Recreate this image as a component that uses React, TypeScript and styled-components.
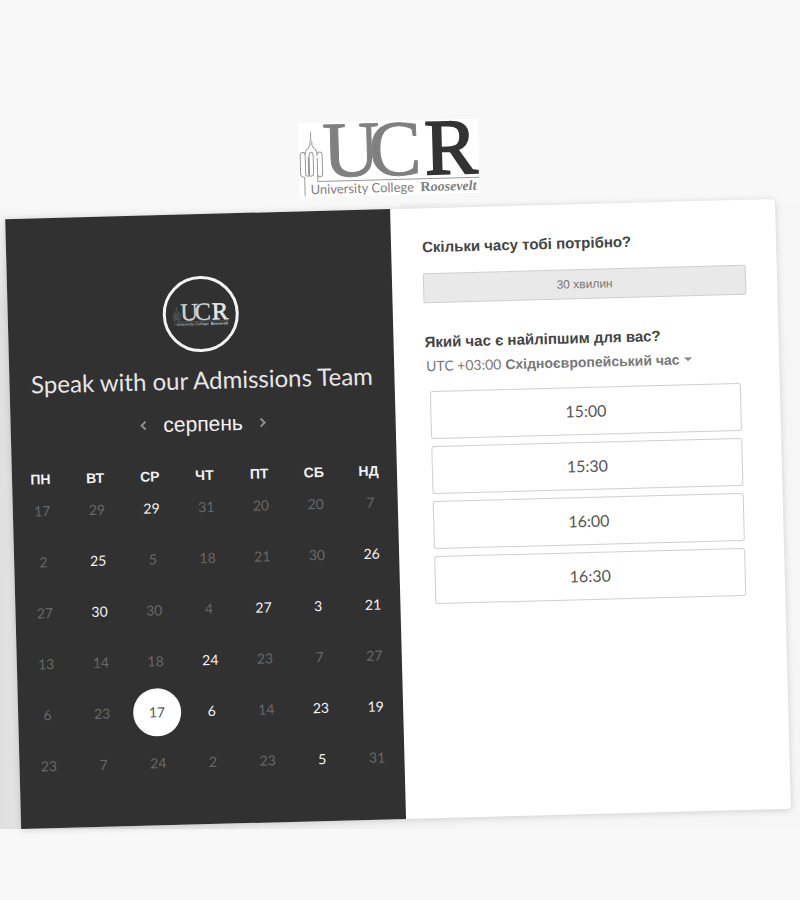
import React, { useState } from "react";
import styled, { createGlobalStyle } from "styled-components";

const SANS = `"Liberation Sans", Arial, sans-serif`;
const HUMANIST = `Lato, "Liberation Sans", sans-serif`;

const GlobalStyle = createGlobalStyle`
  * { box-sizing: border-box; }
  body { margin: 0; background: #f8f8f8; font-family: ${SANS}; }
  button { font: inherit; cursor: pointer; }
`;

const Page = styled.main`
  min-height: 100vh;
  padding: 121px 17px 80px 13px;
  overflow: hidden;
  background:
    linear-gradient(180deg, #f8f8f8, rgba(248, 248, 248, 0)) 0 200px / 50% 110px no-repeat,
    linear-gradient(90deg, #e0e0e0, #e3e3e3 20px, #f6f6f6 60%) 0 203px / 100% 626px no-repeat,
    #f8f8f8;
`;

const Scene = styled.div`
  display: flex;
  flex-direction: column;
  align-items: center;
  gap: 14px;
  transform: rotate(-1.5deg);
  transform-origin: 50% 56%;
`;

const LogoSvg = styled.svg<{ $light: boolean }>`
  display: block;
  overflow: visible;
  background: ${(p) => (p.$light ? "transparent" : "#fff")};
`;

const Card = styled.section`
  width: 100%;
  min-height: 610px;
  display: grid;
  grid-template-columns: 1fr 1fr;
  border-radius: 0 4px 4px 0;
  background: #fff;
  box-shadow: 0 1px 7px rgba(0, 0, 0, 0.16);
`;

const CalendarPanel = styled.section`
  display: flex;
  flex-direction: column;
  align-items: center;
  padding: 62px 0 32px;
  background: #313131;
  color: #f2f2f2;
`;

const Avatar = styled.div`
  width: 76px;
  height: 76px;
  display: grid;
  place-items: center;
  border: 3px solid #f4f4f4;
  border-radius: 50%;
`;

const Title = styled.h1`
  margin: 12px 0 0;
  font: 400 24px/32px ${HUMANIST};
  color: #e6e6e6;
  white-space: nowrap;
`;

const MonthRow = styled.div`
  display: flex;
  align-items: center;
  gap: 14px;
  margin-top: 12px;
`;

const Month = styled.h2`
  margin: 0;
  font: 400 21px/32px ${SANS};
`;

const Arrow = styled.button`
  width: 12px;
  height: 24px;
  padding: 0;
  display: grid;
  place-items: center;
  border: 0;
  background: none;
  color: #8f8f8f;
`;

const Calendar = styled.table`
  width: calc(100% - 2px);
  margin-top: 27px;
  table-layout: fixed;
  border-collapse: collapse;
`;

const Weekday = styled.th`
  height: 16px;
  padding: 0;
  font: 700 14px/16px ${SANS};
`;

const DayCell = styled.td`
  height: 51px;
  padding: 0 0 0 2px;
  text-align: center;
  vertical-align: top;
`;

const Day = styled.button<{ $selected: boolean }>`
  width: 48px;
  height: 48px;
  padding: 0;
  border: 0;
  border-radius: 50%;
  background: ${(p) => (p.$selected ? "#fff" : "transparent")};
  color: ${(p) => (p.$selected ? "#555" : "#f4f4f4")};
  font: 400 14px/16px ${HUMANIST};
  &:disabled { color: #686868; cursor: default; }
`;

const TimePanel = styled.section`
  padding: 27px 31px 32px;
`;

const Question = styled.h2`
  margin: 0;
  font: 700 15px/24px ${SANS};
  color: #444;
`;

const Duration = styled.button`
  display: block;
  width: 100%;
  height: 30px;
  margin: 14px 0 27px;
  border: 1px solid #cfcfcf;
  border-radius: 2px;
  background: #e9e9e9;
  color: #777;
  font: 400 12px/16px ${SANS};
`;

const Zone = styled.button`
  display: flex;
  align-items: center;
  gap: 4px;
  padding: 0 0 0 1px;
  border: 0;
  background: none;
  color: #777;
  font: 400 14px/24px ${HUMANIST};
`;

const ZoneName = styled.span`
  font: 700 14px/24px ${SANS};
`;

const Caret = styled.span`
  margin-left: 1px;
  border: 4px solid transparent;
  border-top-color: #888;
  border-bottom: 0;
`;

const Slots = styled.div`
  display: grid;
  gap: 7px;
  margin-top: 13px;
  padding: 0 8px 0 4px;
`;

const Slot = styled.button`
  height: 48px;
  border: 1px solid #d0d0d0;
  border-radius: 3px;
  background: #fff;
  color: #555;
  font: 400 16px/24px ${HUMANIST};
`;

type LogoProps = { width: number; height: number; light?: boolean };

function Logo({ width, height, light = false }: LogoProps) {
  const soft = light ? "#d0d0d0" : "#808080";
  const strong = light ? "#e6e6e6" : "#333";
  const line = light ? "#8a8a8a" : "#999";
  return (
    <LogoSvg
      $light={light}
      width={width}
      height={height}
      viewBox="0 0 180 74"
      role="img"
      aria-label="University College Roosevelt"
    >
      <g fill="none" stroke={line} strokeWidth="1" strokeLinejoin="round">
        <path d="M12.500 9v9M11.500 18v4q-1 3-4 5l-1 4M13.500 18v4q1 3 4 5l1 4" />
        <path d="M5.500 73V54q-4 0-4-4V33q0-4 2.500-4t2.500 4v17q0 3 2 3t2-3V33q0-4 2-4t2 4v17q0 3-2.500 3t-2.500-3V34" />
        <path d="M18.500 35v15q0 4 2.500 4t2.500-4V33q0-4-2.500-4t-3 4M18.500 50v8.500H180" />
      </g>
      <g fontFamily="Liberation Serif, serif" fontSize="79">
        <text x="24" y="54" fill={soft} stroke={soft}>U</text>
        <text x="70" y="54" fill={soft} stroke={soft}>C</text>
        <text x="126" y="54" fill={strong} stroke={strong} strokeWidth="2">R</text>
      </g>
      <text x="11" y="71" fontFamily="Lato, sans-serif" fontSize="13" fill={soft}>University College</text>
      <text x="121" y="71" fontFamily="Liberation Serif, serif" fontSize="14" fontWeight="700" fill={soft}>
        R<tspan fontStyle="italic">oosevelt</tspan>
      </text>
    </LogoSvg>
  );
}

const weekdays = ["ПН", "ВТ", "СР", "ЧТ", "ПТ", "СБ", "НД"];
const weeks = [
  [17, 29, 29, 31, 20, 20, 7],
  [2, 25, 5, 18, 21, 30, 26],
  [27, 30, 30, 4, 27, 3, 21],
  [13, 14, 18, 24, 23, 7, 27],
  [6, 23, 17, 6, 14, 23, 19],
  [23, 7, 24, 2, 23, 5, 31],
];
const available = new Set(["0-2", "1-1", "1-6", "2-1", "2-4", "2-5", "2-6", "3-3", "4-2", "4-3", "4-5", "4-6", "5-5"]);
const slots = ["15:00", "15:30", "16:00", "16:30"];

export default function App() {
  const [selected, setSelected] = useState("4-2");
  return (
    <Page>
      <GlobalStyle />
      <Scene>
        <Logo width={180} height={74} />
        <Card>
          <CalendarPanel>
            <Avatar>
              <Logo width={56} height={23} light />
            </Avatar>
            <Title>Speak with our Admissions Team</Title>
            <MonthRow>
              <Arrow aria-label="Попередній місяць">
                <svg width="8" height="12" fill="none" stroke="currentColor" strokeWidth="2"><path d="M6 2L2 6l4 4" /></svg>
              </Arrow>
              <Month>серпень</Month>
              <Arrow aria-label="Наступний місяць">
                <svg width="8" height="12" fill="none" stroke="currentColor" strokeWidth="2"><path d="M2 2l4 4-4 4" /></svg>
              </Arrow>
            </MonthRow>
            <Calendar>
              <thead>
                <tr>{weekdays.map((d) => <Weekday key={d} scope="col">{d}</Weekday>)}</tr>
              </thead>
              <tbody>
                {weeks.map((week, r) => (
                  <tr key={r}>
                    {week.map((day, c) => {
                      const id = `${r}-${c}`;
                      return (
                        <DayCell key={id}>
                          <Day
                            $selected={selected === id}
                            aria-pressed={selected === id}
                            disabled={!available.has(id)}
                            onClick={() => setSelected(id)}
                          >
                            {day}
                          </Day>
                        </DayCell>
                      );
                    })}
                  </tr>
                ))}
              </tbody>
            </Calendar>
          </CalendarPanel>
          <TimePanel>
            <Question>Скільки часу тобі потрібно?</Question>
            <Duration>30 хвилин</Duration>
            <Question>Який час є найліпшим для вас?</Question>
            <Zone>
              UTC +03:00 <ZoneName>Східноєвропейський час</ZoneName>
              <Caret />
            </Zone>
            <Slots>
              {slots.map((t) => <Slot key={t}>{t}</Slot>)}
            </Slots>
          </TimePanel>
        </Card>
      </Scene>
    </Page>
  );
}
